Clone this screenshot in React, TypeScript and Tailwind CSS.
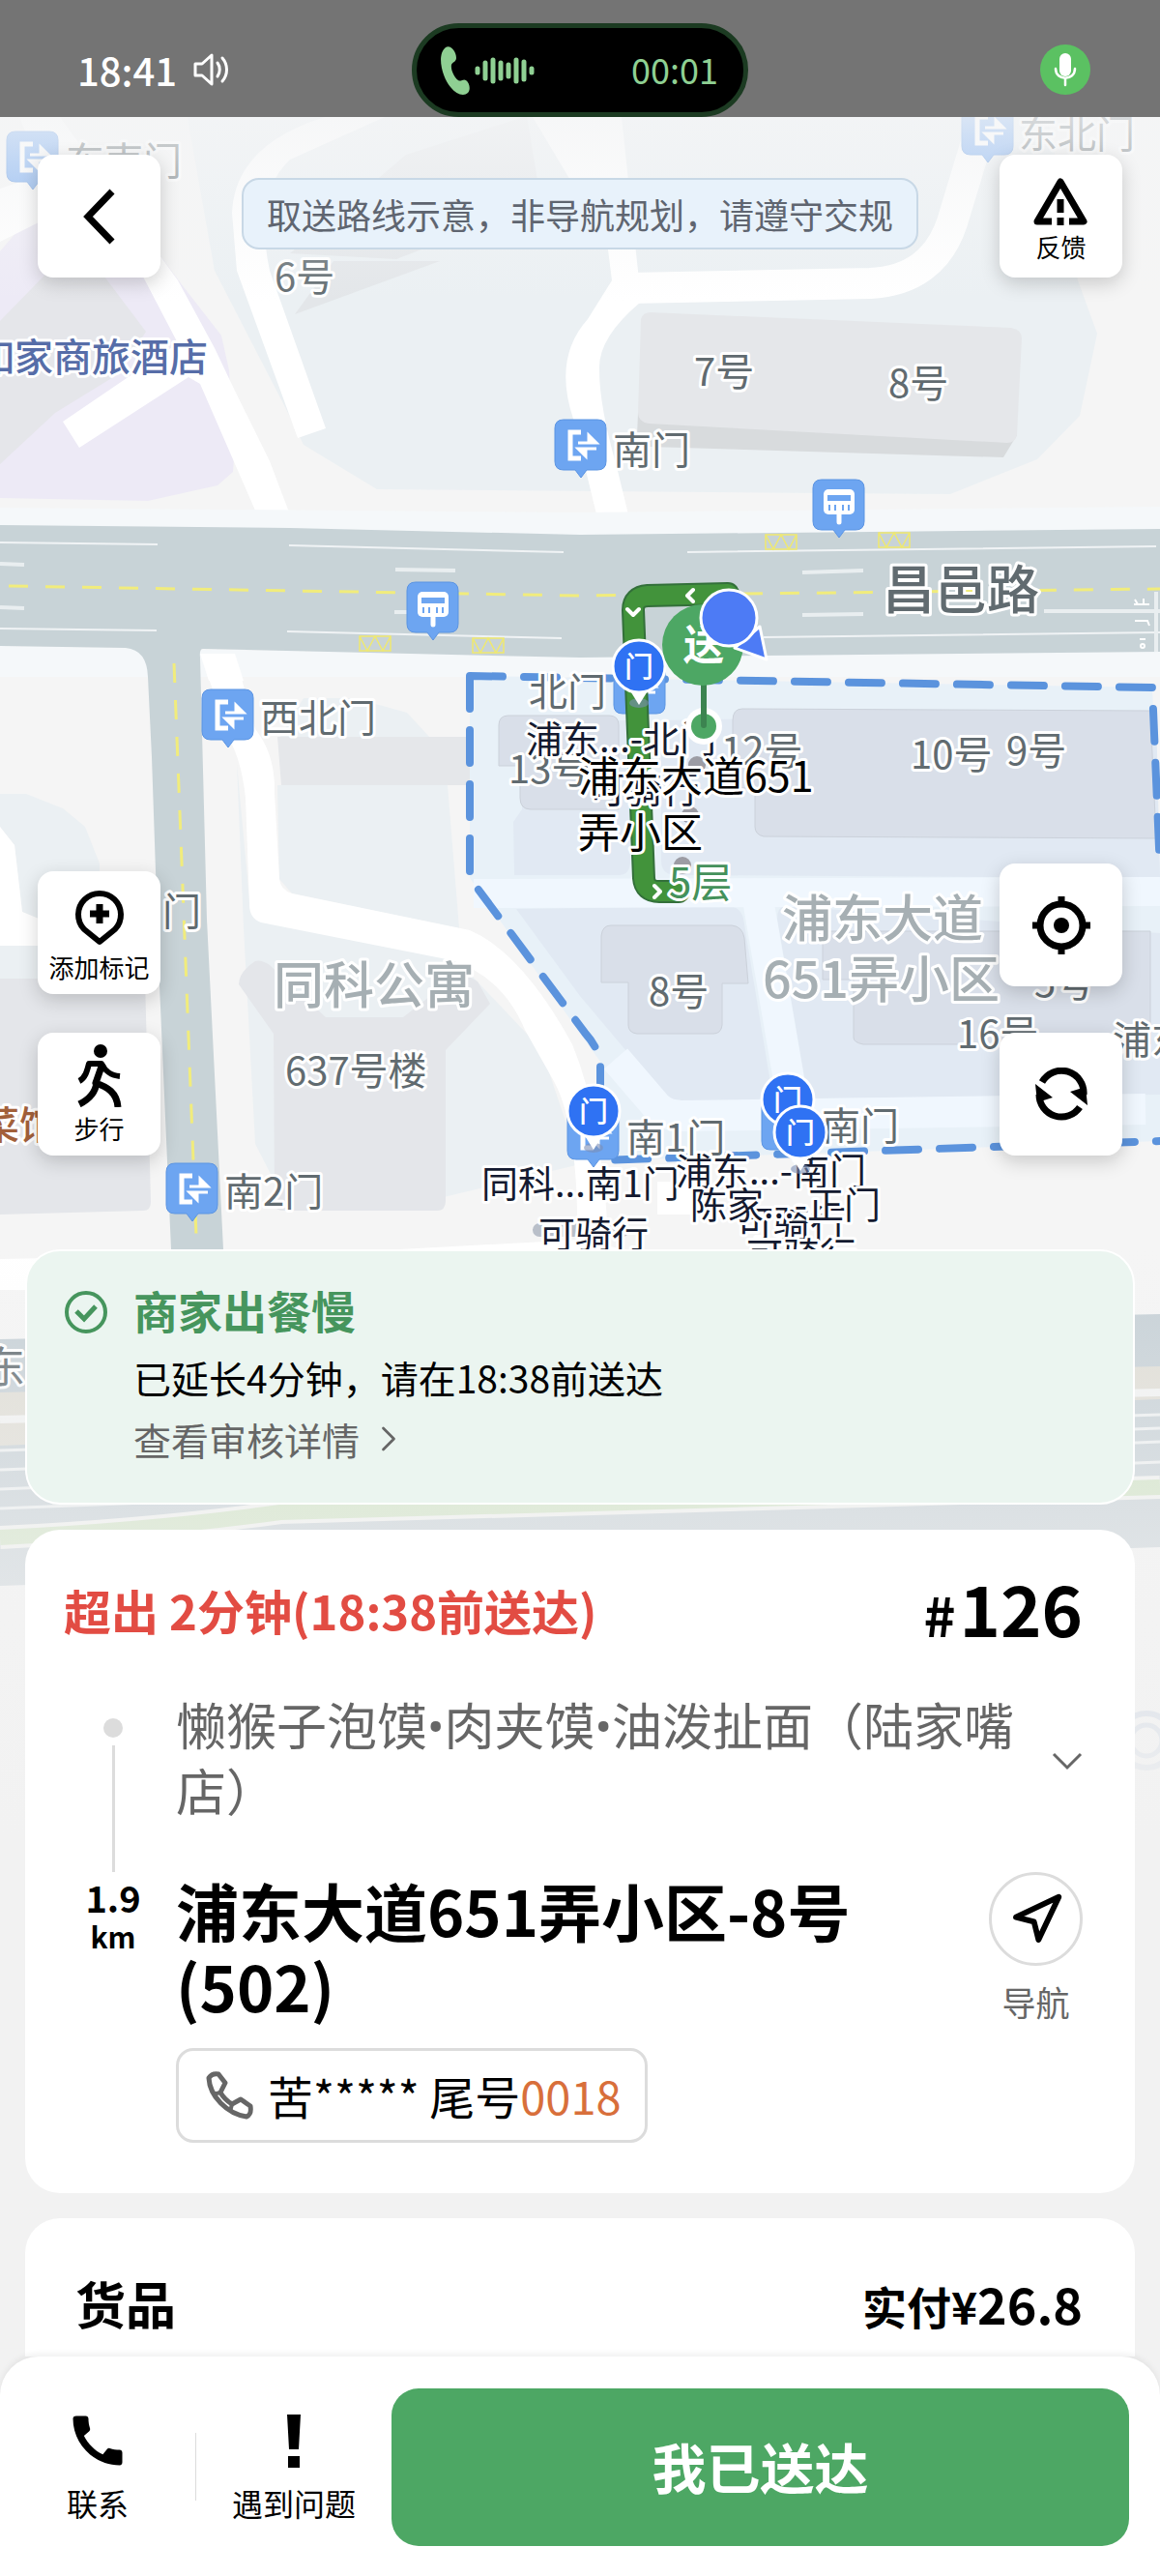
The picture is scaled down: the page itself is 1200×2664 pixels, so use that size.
import type { ReactNode } from 'react'
import { ChevronRight, Navigation } from 'lucide-react'
import { MdCall } from 'react-icons/md'

type MapLabel = {
  text: string
  x: number
  y: number
  size?: number
  color?: string
  weight?: number
}

const GREY = '#616b70'
const INK = '#141a30'
const AREA = '#a6afb3'

const poiLabels: MapLabel[] = [
  { text: '东南门', x: 68, y: 181 },
  { text: '东北门', x: 1054, y: 153 },
  { text: '6号', x: 284, y: 301 },
  { text: '如家商旅酒店', x: -25, y: 384, color: '#566da8', weight: 500 },
  { text: '7号', x: 718, y: 399 },
  { text: '8号', x: 919, y: 411 },
  { text: '南门', x: 634, y: 480 },
  { text: '昌邑路', x: 913, y: 630, size: 54, weight: 500 },
  { text: '西北门', x: 269, y: 757 },
  { text: '北门', x: 547, y: 730 },
  { text: '13号', x: 526, y: 810 },
  { text: '12号', x: 746, y: 791 },
  { text: '10号', x: 942, y: 795 },
  { text: '9号', x: 1041, y: 791 },
  { text: '门', x: 168, y: 957 },
  { text: '同科公寓', x: 283, y: 1038, size: 52, color: AREA, weight: 500 },
  { text: '637号楼', x: 295, y: 1122 },
  { text: '浦东大道', x: 809, y: 969, size: 52, color: AREA, weight: 500 },
  { text: '651弄小区', x: 789, y: 1032, size: 52, color: AREA, weight: 500 },
  { text: '8号', x: 671, y: 1040 },
  { text: '5号', x: 1070, y: 1031 },
  { text: '16号', x: 990, y: 1084 },
  { text: '浦东', x: 1151, y: 1090 },
  { text: '菜馆', x: -20, y: 1178, color: '#a2603a', weight: 500 },
  { text: '南2门', x: 232, y: 1247 },
  { text: '南1门', x: 648, y: 1191 },
  { text: '南门', x: 850, y: 1179 },
  { text: '东', x: -18, y: 1430, size: 44 },
]

const gateLabels: MapLabel[] = [
  { text: '浦东...-北门', x: 544, y: 778 },
  { text: '可骑行', x: 609, y: 830 },
  { text: '同科...南1门', x: 498, y: 1238 },
  { text: '可骑行', x: 557, y: 1290 },
  { text: '可骑行', x: 762, y: 1279 },
  { text: '可骑行', x: 772, y: 1312 },
  { text: '浦东...-南门', x: 699, y: 1225 },
  { text: '陈家...-正门', x: 714, y: 1260 },
]

const gatePins = [
  { x: 661, y: 689 },
  { x: 614, y: 1149 },
  { x: 815, y: 1137 },
  { x: 828, y: 1171 },
]

const doorPins = [
  { x: 7, y: 136 },
  { x: 995, y: 108 },
  { x: 574, y: 434 },
  { x: 209, y: 713 },
  { x: 172, y: 1203 },
  { x: 635, y: 686 },
  { x: 587, y: 1147 },
  { x: 788, y: 1137 },
]

const busPins = [
  { x: 421, y: 602 },
  { x: 841, y: 496 },
]

const busBoxes = [
  { x: 372, y: 658 },
  { x: 489, y: 660 },
  { x: 792, y: 553 },
  { x: 909, y: 551 },
]

export default function App() {
  return (
    <div className="relative flex min-h-screen w-full flex-col overflow-x-clip bg-[#f2f2f2] font-['Noto_Sans_CJK_SC',sans-serif] text-black">
      <MapCanvas />
      <StatusBar />
      <main className="relative flex flex-1 flex-col">
        <MapControls />
        <div className="flex flex-1 flex-col gap-[26px] px-[26px]">
          <DelayNotice />
          <OrderCard />
          <GoodsCard />
        </div>
      </main>
      <ActionBar />
    </div>
  )
}

function StatusBar() {
  return (
    <header className="relative flex h-[121px] items-start justify-between bg-[#747474] px-[72px]">
      <div className="flex h-[144px] flex-1 items-center gap-4 text-[40px] leading-none font-medium text-white">
        <span className="ml-2">18:41</span>
        <svg viewBox="0 0 40 40" className="size-10" fill="none" stroke="currentColor" strokeWidth="3" strokeLinecap="round" strokeLinejoin="round">
          <path d="M3 14h7l10-9v30l-10-9H3z" />
          <path d="M26 13c3 4 3 10 0 14M31 8c6 7 6 17 0 24" />
        </svg>
      </div>
      <div className="mt-6 flex h-[97px] w-[348px] items-center rounded-full border-[5px] border-[#1c3b22] bg-black pr-[26px] pl-6 text-[#8fd093]">
        <svg viewBox="0 0 32 52" className="h-[52px] w-8" fill="currentColor">
          <path d="M6 2C11-1 17 6 17 13c0 4-4 4-5 7-1 5 3 13 7 16 3 2 5-2 8 0 4 3 5 10 2 13-4 4-12 2-18-6C3 34-4 10 6 2z" />
        </svg>
        <svg viewBox="0 0 62 28" className="ml-1 h-7 w-[62px]" stroke="currentColor" strokeWidth="5" strokeLinecap="round">
          <path d="M3 12v4M11 6v16M19 3v22M27 6v16M35 8v12M43 3v22M51 5v18M59 12v4" />
        </svg>
        <span className="ml-auto pb-1 text-4xl leading-none">00:01</span>
      </div>
      <div className="flex h-[144px] flex-1 items-center justify-end">
        <svg viewBox="0 0 52 52" className="size-[52px]">
          <circle cx="26" cy="26" r="26" fill="#5bc162" />
          <rect x="20" y="9" width="12" height="24" rx="6" fill="#fff" />
          <path d="M16 25c0 13 20 13 20 0M26 35v7" fill="none" stroke="#fff" strokeWidth="2.5" strokeLinecap="round" />
        </svg>
      </div>
    </header>
  )
}

function MapControls() {
  return (
    <section className="flex h-[1171px] flex-col justify-between px-[39px] pt-[39px] pb-[97px]">
      <div className="flex items-start justify-between">
        <MapButton ariaLabel="返回">
          <svg viewBox="0 0 36 60" className="h-[60px] w-9" fill="none" stroke="currentColor" strokeWidth="7">
            <path d="M31 4 6 30l25 26" />
          </svg>
        </MapButton>
        <p className="mt-6 flex h-[74px] items-center rounded-[18px] border-2 border-[#c8d8e6] bg-[#e8f2fb] px-6 text-4xl whitespace-nowrap text-[#5f6570]">
          取送路线示意，非导航规划，请遵守交规
        </p>
        <MapButton label="反馈">
          <svg viewBox="0 0 58 50" className="mt-2 h-[50px] w-[58px]" fill="none" stroke="currentColor" strokeWidth="7" strokeLinejoin="round">
            <path d="M20 46H5L29 5l24 41H38" />
            <path d="M29 23v14M29 42v8" />
          </svg>
        </MapButton>
      </div>
      <div className="flex items-end justify-between">
        <div className="flex flex-col gap-10">
          <MapButton label="添加标记">
            <svg viewBox="0 0 52 58" className="mt-2 h-[58px] w-[52px]" fill="none" stroke="currentColor" strokeWidth="6">
              <path d="M26 54 10 41a22 22 0 1 1 32 0z" strokeLinejoin="round" />
              <path d="M26 15v20M16 25h20" strokeWidth="7" />
            </svg>
          </MapButton>
          <MapButton label="步行">
            <svg viewBox="0 0 48 66" className="h-[66px] w-12" fill="none" stroke="currentColor" strokeWidth="6" strokeLinejoin="round">
              <circle cx="25" cy="8" r="7" fill="currentColor" stroke="none" />
              <path d="M3 39c6-3 8-10 10-18h13c4 8 9 12 19 13" />
              <path d="M27 21 20 41c12 4 22 10 23 25M21 40C20 51 13 58 3 63" strokeWidth="7" />
            </svg>
          </MapButton>
        </div>
        <div className="flex flex-col gap-12">
          <MapButton ariaLabel="定位">
            <svg viewBox="0 0 60 60" className="size-[60px]" fill="none" stroke="currentColor" strokeWidth="7">
              <circle cx="30" cy="30" r="22" />
              <circle cx="30" cy="30" r="8" fill="currentColor" stroke="none" />
              <path d="M30 0v8M30 52v8M0 30h8M52 30h8" />
            </svg>
          </MapButton>
          <MapButton ariaLabel="刷新">
            <svg viewBox="0 0 56 56" className="size-14" fill="none" stroke="currentColor" strokeWidth="7">
              <path d="M8 15a23 23 0 0 1 43 13M47 41A23 23 0 0 1 5 28" />
              <path d="M1 17 19 31 3 36zM55 39 37 25l16-5z" fill="currentColor" stroke="none" />
            </svg>
          </MapButton>
        </div>
      </div>
    </section>
  )
}

function MapButton({
  label,
  ariaLabel,
  children,
}: {
  label?: string
  ariaLabel?: string
  children: ReactNode
}) {
  return (
    <button
      type="button"
      aria-label={ariaLabel}
      className="flex size-[127px] flex-col items-center justify-center gap-1 rounded-2xl bg-white shadow-[0_6px_20px_rgba(0,0,0,0.18)]"
    >
      {children}
      {label && <span className="text-[26px] leading-9">{label}</span>}
    </button>
  )
}

function DelayNotice() {
  return (
    <section className="flex h-[264px] gap-[26px] rounded-[36px] border-2 border-white bg-[#ebf5f0] px-[38px] pt-[30px]">
      <svg viewBox="0 0 46 46" className="mt-[10px] size-[46px] shrink-0" fill="none" stroke="#46955d" strokeWidth="4">
        <circle cx="23" cy="23" r="20" />
        <path d="m13 22 8 8 12-13" strokeWidth="5" />
      </svg>
      <div className="flex flex-col items-start">
        <h2 className="text-[46px] leading-[60px] font-bold text-[#46955d]">商家出餐慢</h2>
        <p className="mt-2 text-[39px] leading-[64px]">已延长4分钟，请在18:38前送达</p>
        <a href="#review" className="flex items-center gap-2 text-[39px] leading-[64px] text-[#666]">
          查看审核详情
          <ChevronRight className="size-11" strokeWidth={1.5} />
        </a>
      </div>
    </section>
  )
}

function OrderCard() {
  return (
    <section className="flex h-[686px] flex-col rounded-[36px] bg-white pr-[54px] pl-10">
      <div className="mt-11 flex h-[76px] items-center justify-between">
        <h2 className="text-[49px] leading-none font-bold text-[#e24c43]">超出 2分钟(18:38前送达)</h2>
        <span className="flex items-baseline pb-1 text-[72px] leading-none font-bold">
          <span className="mr-1 text-[56px] leading-none">#</span>126
        </span>
      </div>
      <div className="mt-12 flex">
        <div className="flex w-[102px] shrink-0 flex-col items-center">
          <span className="mt-[27px] size-5 rounded-full bg-[#dcdcdc]" />
          <span className="mt-2 w-[3px] flex-1 bg-[#dcdcdc]" />
        </div>
        {/* the CJK bullet is full width, the Latin one keeps the dishes close together */}
        <p className="ml-[14px] h-[186px] flex-1 pt-1 font-['Roboto','Noto_Sans_CJK_SC',sans-serif] text-[52px] leading-[68px] text-[#666]">
          懒猴子泡馍•肉夹馍•油泼扯面（陆家嘴店）
        </p>
        <button type="button" aria-label="展开" className="mt-14 ml-4 h-8 w-8 text-[#666]">
          <svg viewBox="0 0 32 20" className="h-5 w-8" fill="none" stroke="currentColor" strokeWidth="3">
            <path d="m2 2 14 14L30 2" />
          </svg>
        </button>
      </div>
      <div className="flex">
        <div className="mt-1 flex w-[102px] shrink-0 flex-col items-center font-bold">
          <span className="text-[38px] leading-[44px]">1.9</span>
          <span className="text-[30px] leading-9">km</span>
        </div>
        <div className="ml-[14px] flex flex-1 flex-col items-start">
          <p className="text-[65px] leading-[78px] font-bold">
            浦东大道651弄小区-8号
            <br />
            (502)
          </p>
          <button
            type="button"
            className="mt-[26px] flex h-[98px] items-center gap-3 rounded-[18px] border-[3px] border-[#dcdcdc] px-6 text-[47px] whitespace-nowrap"
          >
            <svg viewBox="0 0 56 56" className="size-14 text-[#666]" fill="none" stroke="currentColor" strokeWidth="5" strokeLinejoin="round">
              <path d="M17 6 24 15 19 25C22 30 26 34 31 37L40 32 50 39C51 45 50 48 46 50 26 47 8 29 7 10 9 7 12 5 17 6z" />
              <path d="m19 25-8 2M31 37l-2 8" strokeWidth="4" />
            </svg>
            <span>
              苦***** 尾号<span className="text-[#d86f3b]">0018</span>
            </span>
          </button>
        </div>
        <button type="button" className="flex flex-col items-center self-start text-[35px] text-[#666]">
          <span className="flex size-[97px] items-center justify-center rounded-full border-[3px] border-[#dcdcdc] text-black">
            <Navigation className="size-14" strokeWidth={2.5} />
          </span>
          <span className="mt-3 leading-[50px]">导航</span>
        </button>
      </div>
    </section>
  )
}

function GoodsCard() {
  return (
    <section className="min-h-[140px] flex-1 rounded-t-[36px] bg-white pr-[54px] pl-[52px]">
      <div className="mt-[50px] flex h-[76px] items-center justify-between font-bold">
        <h2 className="text-[52px] leading-none">货品</h2>
        <span className="flex items-baseline text-[46px] leading-none">
          实付¥<span className="text-[52px] leading-none">26.8</span>
        </span>
      </div>
    </section>
  )
}

function ActionBar() {
  return (
    <footer className="sticky bottom-0 flex h-[227px] items-start rounded-t-[40px] bg-white pt-[33px] pr-8 shadow-[0_-3px_6px_rgba(0,0,0,0.06)]">
      <button type="button" className="flex w-[202px] flex-col items-center pt-5 text-[32px]">
        <MdCall className="size-[68px]" />
        <span className="mt-1 leading-[52px]">联系</span>
      </button>
      <span className="mt-[46px] h-[70px] w-px bg-[#dcdcdc]" />
      <button type="button" className="flex w-[202px] flex-col items-center pt-5 text-[32px]">
        <svg viewBox="0 0 16 68" className="h-[68px] w-4">
          <path d="M1 7h14l-2 36H3zM2 50h12v12H2z" />
        </svg>
        <span className="mt-1 leading-[52px]">遇到问题</span>
      </button>
      <button type="button" className="h-[163px] flex-1 rounded-[28px] bg-[#4da764] pb-1 text-[56px] font-bold text-white">
        我已送达
      </button>
    </footer>
  )
}

function Label({ text, x, y, size = 40, color = GREY, weight = 400 }: MapLabel) {
  return (
    <text
      x={x}
      y={y}
      fontSize={size}
      fontWeight={weight}
      fill={color}
      stroke="#fff"
      strokeWidth="6"
      strokeLinejoin="round"
      paintOrder="stroke"
    >
      {text}
    </text>
  )
}

function PinShape() {
  return (
    <path
      d="M9 0h35q9 0 9 9v34q0 9-9 9H33l-6 8-6-8H9q-9 0-9-9V9q0-9 9-9z"
      fill="#6da5f1"
      stroke="#5b94e2"
      strokeWidth="1"
    />
  )
}

function MapCanvas() {
  return (
    <svg
      viewBox="0 0 1200 1900"
      preserveAspectRatio="xMidYMin slice"
      className="absolute inset-x-0 top-0 h-[1900px] w-full"
      aria-label="地图"
    >
      <defs>
        <linearGradient id="fade-top" x1="0" y1="0" x2="0" y2="1">
          <stop offset="0" stopColor="#f4f5f6" stopOpacity="0.8" />
          <stop offset="0.4" stopColor="#f4f5f6" stopOpacity="0.5" />
          <stop offset="1" stopColor="#f4f5f6" stopOpacity="0" />
        </linearGradient>
        <linearGradient id="fade-bottom" x1="0" y1="0" x2="0" y2="1">
          <stop offset="0" stopColor="#f2f2f2" stopOpacity="0" />
          <stop offset="0.5" stopColor="#f2f2f2" stopOpacity="0.55" />
          <stop offset="1" stopColor="#f2f2f2" />
        </linearGradient>
      </defs>
      <rect width="1200" height="1900" fill="#f5f5f5" />
      <NorthBlocks />
      <SouthBlocks />
      <MainRoads />
      <Compound />
      <ExpressWay />
      <MapPins />
      <rect y="121" width="1200" height="190" fill="url(#fade-top)" />
      <rect y="1290" width="1200" height="610" fill="url(#fade-bottom)" />
    </svg>
  )
}

function NorthBlocks() {
  return (
    <g>
      <path d="M190 100 222 280 298 427 314 460 390 506 983 511 1073 475 1117 430 1135 345 1115 290 1080 100z" fill="#ebf0f3" />
      <path d="M300 262 420 160 545 120 560 210 410 268z" fill="#e3e6e9" />
      <path d="M345 270h110l-150 55z" fill="#e3e6e9" />
      <path d="M0 515 153 518 225 502 241 488 242 473 237 383 229 347 187 293 110 190H60L0 260z" fill="#edeaf6" />
      <path d="M0 480 57 427 122 387 151 343 111 290 80 250 0 332z" fill="#e5e6ea" />
      <g fill="#fff">
        <path d="M0 195 45 180 20 121H62L184 290 222 360 241 400 279 477 298 527 314 546H260L268 537 207 397 195 390 82 463 65 436 184 355 150 290 100 200 0 250z" />
        <path d="M336 121Q243 150 240 220L245 280 308 453 337 443 279 280Q262 200 300 165L398 121z" />
        <path d="M551 121H643L660 280 662 313Q618 350 620 383 620 420 638 483L652 540 668 553H608L619 540 593 433Q572 370 608 330L633 290 628 250z" />
      </g>
      <path d="M650 298 900 293Q965 290 985 230L1018 121" fill="none" stroke="#fff" strokeWidth="32" />
      <path d="M660 427 659 451Q660 460 672 462L1038 473 1052 450z" fill="#d8dbdd" />
      <path d="M673 323 1046 339Q1057 341 1057 350L1052 450Q1050 458 1042 458L671 438Q660 436 660 427L663 330Q665 323 673 323z" fill="#e5e7ea" />
    </g>
  )
}

function SouthBlocks() {
  return (
    <g>
      <path d="M0 821H27L65 836 88 855 103 893V950H40L23 943 15 874 0 855z" fill="#ebf0f3" />
      <path d="M0 855 15 874 23 943 40 950V980H0z" fill="#fff" />
      <path d="M0 978H165V1012H0z" fill="#ebf0f3" />
      <path d="M0 1012H150L156 1243Q156 1252 148 1252L0 1256z" fill="#e4e6ea" />
      <path d="M290 762 314 722H367L421 737 444 762zM287 812H463L475 960 302 924 289 909z" fill="#ebf0f3" />
      <path d="M287 762H488Q496 762 497 772V802Q497 812 488 812H291z" fill="#e5e7ea" />
      <path d="M245 790 258 930 470 990 560 1085 600 1204 459 1238 283 1220 264 1183 252 960z" fill="#ebf0f3" />
      <path d="M264 994Q247 1005 247 1018L283 1069 284 1246Q284 1252 295 1252H452Q461 1252 461 1242V1086L507 1038 494 1015 465 998 444 1031 417 1052H337L314 1031 279 998Q270 992 264 994z" fill="#e4e6ea" />
      <path
        d="M207 676H243L264 754Q285 780 284 820L289 909Q290 920 302 924L486 962Q540 985 592 1080 625 1160 630 1300H597Q600 1170 574 1120L543 1065Q520 1010 467 993L270 954Q258 950 258 935L254 825Q250 790 240 770z"
        fill="#fff"
      />
      <path d="M680 1222H730V1256H680z" fill="#fff" />
      <path d="M340 1296 600 1282 680 1300 600 1310H340z" fill="#fff" />
    </g>
  )
}

function MainRoads() {
  return (
    <g>
      <path d="M0 525 600 530 1200 524V548L640 554 0 544zM0 668 600 678 1200 672V700H0z" fill="#f5f8fa" />
      <path d="M207 676H243L252 704H216z" fill="#fff" />
      <path
        d="M0 543 300 546 600 553 1200 547V674L791 678 600 680 210 671Q206 671 207 680L214 951 231 1292H177L165 1019 157 783 153 700Q152 672 130 670L0 668z"
        fill="#c8d3d7"
      />
      <g stroke="#f0f3f5" strokeWidth="2">
        <path d="M0 561 163 563M299 564 583 571M0 650 162 652M297 653 581 660M711 571 1196 565M790 659 1200 654" />
      </g>
      <g stroke="#e9eef0" strokeWidth="4">
        <path d="M0 583 25 584M0 628 25 629M409 589 471 590M408 633H425M830 592 893 590M830 636 893 635M1080 632 1200 632M1196 612V674" />
      </g>
      <path d="M9 606 600 616 1200 609" fill="none" stroke="#f1ec7c" strokeWidth="3" strokeDasharray="20 18" />
      <path d="M180 686 203 1278" fill="none" stroke="#f1ec7c" strokeWidth="3" strokeDasharray="20 18" />
      {busBoxes.map(box => (
        <path
          key={box.x}
          transform={`translate(${box.x} ${box.y})`}
          d="M0 0H32V15H0ZL8 15 16 0 24 15 32 0"
          fill="none"
          stroke="#efe96f"
          strokeWidth="1.5"
        />
      ))}
      <g stroke="#fff" strokeWidth="2" fill="none">
        <path d="M1173 625h16M1177 625l-3-5M1183 625v-6M1174 642h13l2 5" />
        <circle cx="1182" cy="668" r="2" />
        <path d="M1179 661h6" />
      </g>
    </g>
  )
}

function Compound() {
  return (
    <g>
      <path d="M486 699 1192 711 1200 900V1180L638 1200H620L621 1098 486 908z" fill="#e8f1f8" />
      <g fill="#e1e9f3">
        <path d="M540 837 531 850 532 905 640 905Q652 905 652 890V745H545zM684 745 1196 735 1200 908 700 905Q684 905 684 890z" />
        <path d="M534 940 752 937Q766 937 769 950L800 1138H705Q690 1138 680 1125L600 1030zM812 937 1200 965V1132L836 1136 804 950Q804 938 812 937z" />
      </g>
      <path d="M490 924 1200 922" stroke="#f0f7fe" strokeWidth="30" />
      <path d="M784 930 820 1140M637 1095 680 1145Q690 1154 705 1154L1185 1147" fill="none" stroke="#f0f7fe" strokeWidth="32" />
      <g fill="#d9dfe9" stroke="#cbd1da" strokeWidth="1">
        <path d="M526 740H630Q640 740 640 750V837H549Q538 837 538 825V792H516V750Q516 740 526 740z" />
        <path d="M768 733 1190 735 1196 867 790 865Q781 863 781 855V815H758V745Q758 733 768 733z" />
        <path d="M632 957H757Q768 958 770 970L774 1017H747V1060Q746 1069 738 1069H659Q650 1068 650 1060V1016H622V968Q623 957 632 957z" />
        <path d="M851 963H1190V1080H893Q883 1078 883 1073V1013H851z" />
      </g>
      <path
        d="M486 699 1192 711 1200 900M486 699V908L605 1068Q620 1085 621 1100V1200L1200 1180"
        fill="none"
        stroke="#5b93dd"
        strokeWidth="8"
        strokeDasharray="34 22"
        strokeLinecap="round"
      />
    </g>
  )
}

function ExpressWay() {
  return (
    <g>
      <path d="M0 1302 340 1296V1336L0 1334z" fill="#fff" />
      <path d="M0 1385 1200 1359V1600L0 1640z" fill="#c6d0d6" />
      <path d="M0 1440 1200 1413V1447L0 1495z" fill="#dfddd5" />
      <path d="M0 1468 1200 1440" stroke="#f2f3f3" strokeWidth="8" />
      <path d="M0 1500 1200 1463M0 1520 1200 1477M0 1540 1200 1491M0 1560 1200 1512" stroke="#eef1f2" strokeWidth="3" />
      <path d="M0 1590Q160 1582 290 1564L860 1548 1200 1538" fill="none" stroke="#f2f3f1" strokeWidth="24" />
      <path d="M0 1590Q160 1582 290 1564L860 1548 1200 1538" fill="none" stroke="#cfe3c3" strokeWidth="16" />
      <circle cx="1186" cy="1800" r="28" fill="none" stroke="#a9bbd6" strokeWidth="6" />
      <circle cx="1186" cy="1800" r="16" fill="none" stroke="#a9bbd6" strokeWidth="5" />
    </g>
  )
}

function MapPins() {
  return (
    <g>
      {doorPins.map(pin => (
        <g key={`${pin.x}-${pin.y}`} transform={`translate(${pin.x} ${pin.y})`}>
          <PinShape />
          <path d="M27 13H16V40H27" fill="none" stroke="#fff" strokeWidth="5" />
          <path d="M24 24H43L35 16V24M43 30H24L32 38V30" fill="#fff" stroke="#fff" strokeWidth="3" />
        </g>
      ))}
      {busPins.map(pin => (
        <g key={pin.x} transform={`translate(${pin.x} ${pin.y})`}>
          <PinShape />
          <rect x="11" y="10" width="32" height="26" rx="5" fill="#fff" />
          <path d="M15 16H39V22H15zM16 26h2v6h-2zM22 26h2v6h-2zM30 26h2v6h-2zM36 26h2v6h-2z" fill="#6da5f1" />
          <path d="M27 34V44" stroke="#fff" strokeWidth="5" strokeLinecap="round" />
        </g>
      ))}
      {poiLabels.map(label => (
        <Label key={`${label.x}-${label.y}`} {...label} />
      ))}

      <g fill="none" strokeLinecap="round" strokeLinejoin="round">
        <path d="M753 614 670 616Q655 617 655 631L666 908Q667 922 682 922H702" stroke="#33703a" strokeWidth="24" />
        <path d="M753 614 670 616Q655 617 655 631L666 908Q667 922 682 922H702" stroke="#42933b" strokeWidth="20" />
        <path d="M717 610 711 616 717 622M649 630 655 636 661 630M677 916 683 922 677 928" stroke="#fff" strokeWidth="4" />
      </g>
      <g fill="#9c9ca4">
        <circle cx="721" cy="791" r="9" />
        <circle cx="714" cy="843" r="9" />
        <circle cx="706" cy="895" r="9" />
      </g>
      <rect x="551" y="1265" width="100" height="14" rx="7" fill="#b9bfc9" />
      {gateLabels.map(label => (
        <Label key={`${label.x}-${label.y}`} {...label} size={38} color={INK} />
      ))}

      {gatePins.map(pin => (
        <g key={pin.x} transform={`translate(${pin.x} ${pin.y})`}>
          <ellipse cy="38" rx="10" ry="5" fill="#7c8db5" opacity="0.6" />
          <path d="M-10 24H10L0 40z" fill="#fff" />
          <circle r="27" fill="#2f72f3" stroke="#fff" strokeWidth="3" />
          <text y="11" fontSize="30" fontWeight="500" fill="#fff" textAnchor="middle">
            门
          </text>
        </g>
      ))}

      <circle cx="728" cy="751" r="19" fill="#fff" />
      <circle cx="728" cy="751" r="13" fill="#4da764" />
      <path d="M728 700V750" stroke="#3c8450" strokeWidth="6" strokeLinecap="round" />
      <circle cx="727" cy="667" r="42" fill="#4da764" />
      <text x="728" y="682" fontSize="42" fontWeight="700" fill="#fff" textAnchor="middle">
        送
      </text>
      <path d="M786 648 793 682 760 670z" fill="#4d7bf5" stroke="#fff" strokeWidth="3" strokeLinejoin="round" />
      <circle cx="754" cy="639" r="29" fill="#4d7bf5" stroke="#fff" strokeWidth="3" />

      <Label text="浦东大道651" x={598} y={819} size={43} color="#000" />
      <Label text="弄小区" x={598} y={877} size={43} color="#000" />
      <Label text="5层" x={692} y={928} size={42} color="#44915b" />
    </g>
  )
}
